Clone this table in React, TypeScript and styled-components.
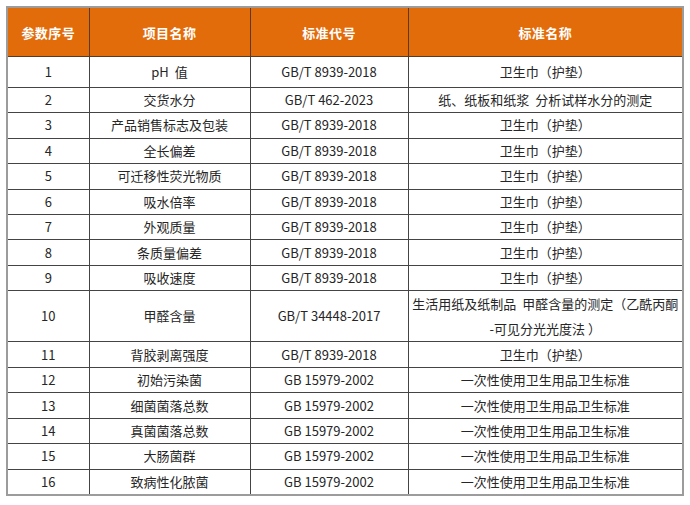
import * as React from "react";
import styled, { createGlobalStyle } from "styled-components";

const GlobalStyle = createGlobalStyle`
  html, body {
    margin: 0;
    padding: 0;
    background: #ffffff;
  }
  body {
    font-family: "Noto Sans CJK SC", "Noto Sans", sans-serif;
  }
`;

const SPage = styled.div`
  padding: 6px 0 0 6px;
`;

const STable = styled.table`
  width: 676px;
  border-collapse: collapse;
  table-layout: fixed;
  border: 2px solid #9c9c9c;
  font-size: 13px;
  color: #262626;
`;

const SCol = styled.col<{ $w: number }>`
  width: ${(p) => p.$w}px;
`;

const SHeadCell = styled.th`
  height: 48px;
  padding: 0;
  background: #e36c0a;
  color: #ffffff;
  font-weight: 700;
  font-size: 13px;
  letter-spacing: 0.4px;
  text-align: center;
  vertical-align: middle;
  border: 1px solid #5a3a20;
`;

const SRow = styled.tr<{ $h: number }>`
  height: ${(p) => p.$h}px;
`;

const SCell = styled.td`
  padding: 0 2px;
  text-align: center;
  vertical-align: middle;
  line-height: 18px;
  border: 1px solid #444444;
  white-space: nowrap;
  overflow: hidden;
`;

const STwoLines = styled.div`
  line-height: 25px;
`;

type Row = {
  no: string;
  item: string;
  code: string;
  name: React.ReactNode;
  h?: number;
};

const TOWEL = "卫生巾（护垫）";
const HYGIENE = "一次性使用卫生用品卫生标准";

const rows: Row[] = [
  { no: "1", item: "pH\u00a0\u00a0值", code: "GB/T 8939-2018", name: TOWEL, h: 30.5 },
  {
    no: "2",
    item: "交货水分",
    code: "GB/T 462-2023",
    name: "纸、纸板和纸浆\u00a0\u00a0分析试样水分的测定",
    h: 25.6,
  },
  { no: "3", item: "产品销售标志及包装", code: "GB/T 8939-2018", name: TOWEL, h: 25.6 },
  { no: "4", item: "全长偏差", code: "GB/T 8939-2018", name: TOWEL },
  { no: "5", item: "可迁移性荧光物质", code: "GB/T 8939-2018", name: TOWEL },
  { no: "6", item: "吸水倍率", code: "GB/T 8939-2018", name: TOWEL },
  { no: "7", item: "外观质量", code: "GB/T 8939-2018", name: TOWEL },
  { no: "8", item: "条质量偏差", code: "GB/T 8939-2018", name: TOWEL },
  { no: "9", item: "吸收速度", code: "GB/T 8939-2018", name: TOWEL, h: 25.6 },
  {
    no: "10",
    item: "甲醛含量",
    code: "GB/T 34448-2017",
    name: (
      <STwoLines>
        生活用纸及纸制品&nbsp;&nbsp;甲醛含量的测定（乙酰丙酮
        <br />
        -可见分光光度法 ）
      </STwoLines>
    ),
    h: 50.8,
  },
  { no: "11", item: "背胶剥离强度", code: "GB/T 8939-2018", name: TOWEL },
  { no: "12", item: "初始污染菌", code: "GB 15979-2002", name: HYGIENE },
  { no: "13", item: "细菌菌落总数", code: "GB 15979-2002", name: HYGIENE },
  { no: "14", item: "真菌菌落总数", code: "GB 15979-2002", name: HYGIENE },
  { no: "15", item: "大肠菌群", code: "GB 15979-2002", name: HYGIENE },
  { no: "16", item: "致病性化脓菌", code: "GB 15979-2002", name: HYGIENE },
];

const App = () => (
  <SPage>
    <GlobalStyle />
    <STable>
      <colgroup>
        <SCol $w={82} />
        <SCol $w={161} />
        <SCol $w={158} />
        <SCol $w={275} />
      </colgroup>
      <thead>
        <tr>
          <SHeadCell>参数序号</SHeadCell>
          <SHeadCell>项目名称</SHeadCell>
          <SHeadCell>标准代号</SHeadCell>
          <SHeadCell>标准名称</SHeadCell>
        </tr>
      </thead>
      <tbody>
        {rows.map((r) => (
          <SRow key={r.no} $h={r.h ?? 25.45}>
            <SCell>{r.no}</SCell>
            <SCell>{r.item}</SCell>
            <SCell>{r.code}</SCell>
            <SCell>{r.name}</SCell>
          </SRow>
        ))}
      </tbody>
    </STable>
  </SPage>
);

export default App;
